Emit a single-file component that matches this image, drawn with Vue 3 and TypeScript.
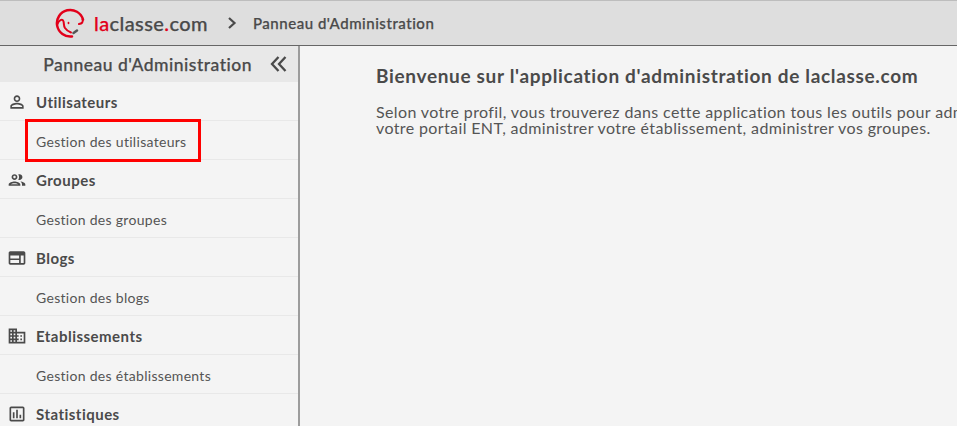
<script setup lang="ts">
const sections = [
  { title: 'Utilisateurs', link: 'Gestion des utilisateurs', icon: 'user', marked: true },
  { title: 'Groupes', link: 'Gestion des groupes', icon: 'group', marked: false },
  { title: 'Blogs', link: 'Gestion des blogs', icon: 'blog', marked: false },
  { title: 'Etablissements', link: 'Gestion des établissements', icon: 'domain', marked: false },
  { title: 'Statistiques', link: '', icon: 'stats', marked: false },
]
</script>

<template>
  <div class="page">
    <header class="topbar">
      <svg class="logo" viewBox="0 0 30 30" width="30" height="30" fill="none">
        <path d="M17 28.400A13.300 13.300 0 1 1 28 11.500" stroke="#e2001a" stroke-width="2.500" stroke-linecap="round" />
        <path d="M2.500 16c1-3.500 5-6 6-2.500.7 2.500 0 4 1.500 6.500 1 1.500 3 3.500 6 4.500" stroke="#e2001a" stroke-width="2" stroke-linecap="round" />
        <path d="M27.500 11.500c1 2.500-.5 4-3.500 4.500" stroke="#e2001a" stroke-width="2" stroke-linecap="round" />
        <ellipse cx="13.500" cy="15" rx=".9" ry="1.300" fill="#e2001a" />
        <path d="M18.500 25l3.500-2.500" stroke="#555" stroke-width="2.500" stroke-linecap="round" />
      </svg>
      <span class="brand"><span class="red">la</span>classe<span class="red">.</span>com</span>
      <svg class="crumb-sep" viewBox="0 0 10 14" width="10" height="14" fill="none">
        <path d="M2 2l5.500 5L2 12" stroke="#4a4a4a" stroke-width="2.200" />
      </svg>
      <span class="crumb">Panneau d'Administration</span>
    </header>
    <div class="body">
      <aside class="side">
        <div class="side-head">
          <span>Panneau d'Administration</span>
          <svg viewBox="0 0 18 18" width="18" height="18" fill="none" class="collapse">
            <path d="M8.500 2L2 9l6.500 7M15.500 2L9 9l6.500 7" stroke="#4a4a4a" stroke-width="2.300" />
          </svg>
        </div>
        <template v-for="s in sections" :key="s.title">
          <div class="row head">
            <svg class="ico" viewBox="0 0 24 24" width="20" height="20" fill="#4a4a4a">
              <path v-if="s.icon === 'user'" d="M12 5.900a2.100 2.100 0 1 1 0 4.200 2.100 2.100 0 0 1 0-4.200m0 9c2.970 0 6.100 1.460 6.100 2.100v1.100H5.900V17c0-.64 3.130-2.100 6.100-2.100M12 4C9.790 4 8 5.790 8 8s1.790 4 4 4 4-1.790 4-4-1.790-4-4-4zm0 9c-2.670 0-8 1.340-8 4v3h16v-3c0-2.660-5.330-4-8-4z" />
              <path v-else-if="s.icon === 'group'" d="M9 13.750c-2.340 0-7 1.170-7 3.500V19h14v-1.750c0-2.330-4.660-3.500-7-3.500zM4.340 17c.84-.58 2.870-1.250 4.660-1.250s3.820.67 4.660 1.250H4.340zM9 12c1.930 0 3.500-1.570 3.500-3.500S10.930 5 9 5 5.500 6.570 5.500 8.500 7.070 12 9 12zm0-5c.83 0 1.500.67 1.500 1.500S9.830 10 9 10s-1.500-.67-1.500-1.500S8.170 7 9 7zm7.040 6.810c1.160.84 1.960 1.960 1.960 3.440V19h4v-1.750c0-2.020-3.500-3.170-5.960-3.440zM15 12c1.930 0 3.500-1.570 3.500-3.500S16.930 5 15 5c-.54 0-1.040.13-1.500.35.630.89 1 1.980 1 3.150s-.37 2.260-1 3.150c.46.220.96.350 1.500.350z" />
              <path v-else-if="s.icon === 'blog'" d="M20 4H4c-1.100 0-2 .9-2 2v12c0 1.100.9 2 2 2h16c1.100 0 2-.9 2-2V6c0-1.100-.9-2-2-2zM4 9h10.500v3.500H4V9zm0 5.500h10.500V18H4v-3.500zM20 18h-3.500V9H20v9z" />
              <path v-else-if="s.icon === 'domain'" d="M12 7V3H2v18h20V7H12zM6 19H4v-2h2v2zm0-4H4v-2h2v2zm0-4H4V9h2v2zm0-4H4V5h2v2zm4 12H8v-2h2v2zm0-4H8v-2h2v2zm0-4H8V9h2v2zm0-4H8V5h2v2zm10 12h-8v-2h2v-2h-2v-2h2v-2h-2V9h8v10zm-2-8h-2v2h2v-2zm0 4h-2v2h2v-2z" />
              <path v-else d="M19 3H5c-1.100 0-2 .9-2 2v14c0 1.100.9 2 2 2h14c1.100 0 2-.9 2-2V5c0-1.100-.9-2-2-2zm0 16H5V5h14v14zM7 10h2v7H7zm4-3h2v10h-2zm4 6h2v4h-2z" />
            </svg>
            <span>{{ s.title }}</span>
          </div>
          <div v-if="s.link" class="row link">
            <span class="link-text" :class="{ marked: s.marked }">{{ s.link }}</span>
          </div>
        </template>
      </aside>
      <main class="main">
        <h1>Bienvenue sur l'application d'administration de laclasse.com</h1>
        <p>Selon votre profil, vous trouverez dans cette application tous les outils pour administrer<br />votre portail ENT, administrer votre établissement, administrer vos groupes.</p>
      </main>
    </div>
  </div>
</template>

<style>
html, body { margin: 0; overflow: hidden; }
</style>

<style scoped>
.page {
  width: 957px;
  height: 426px;
  overflow: hidden;
  display: flex;
  flex-direction: column;
  background: #f4f4f4;
  color: #4a4a4a;
  font-family: Lato, "Noto Sans", sans-serif;
}
.topbar {
  box-sizing: border-box;
  height: 46px;
  flex: none;
  display: flex;
  align-items: center;
  padding-left: 55px;
  background: #dedede;
  border-top: 1px solid #bdbdbd;
  border-bottom: 1px solid #666;
}
.logo { flex: none; }
.brand { margin-left: 9px; font-size: 20px; font-weight: 500; letter-spacing: .4px; -webkit-text-stroke: .25px #4a4a4a; }
.red { color: #e2001a; -webkit-text-stroke: .25px #e2001a; }
.crumb-sep { margin-left: 19px; }
.crumb { margin-left: 16px; font-size: 15px; font-weight: 500; letter-spacing: .53px; -webkit-text-stroke: .25px #4a4a4a; }
.body { flex: 1; display: flex; min-height: 0; }
.side {
  box-sizing: border-box;
  width: 300px;
  flex: none;
  border-right: 2px solid #9c9c9c;
}
.side-head {
  height: 36px;
  display: flex;
  align-items: center;
  justify-content: flex-end;
  gap: 18px;
  padding-right: 10px;
  background: #e8e8e8;
  font-size: 17.500px;
  font-weight: 500;
  letter-spacing: .5px;
  -webkit-text-stroke: .25px #4a4a4a;
}
.collapse { flex: none; }
.row {
  box-sizing: border-box;
  height: 39px;
  padding-top: 2px;
  display: flex;
  align-items: center;
  border-bottom: 1px solid #e8e8e8;
  white-space: nowrap;
}
.head { font-size: 15px; font-weight: 700; letter-spacing: .48px; padding-left: 7px; gap: 9px; }
.ico { flex: none; }
.link { font-size: 14px; padding-left: 36px; letter-spacing: .3px; color: #555; position: relative; }
.marked::after {
  content: "";
  position: absolute;
  left: 25px;
  top: -2px;
  width: 176px;
  height: 43px;
  box-sizing: border-box;
  border: 3px solid #f00;
}
.main { flex: 1; padding: 19px 0 0 76px; min-width: 0; white-space: nowrap; overflow: hidden; }
h1 { margin: 0; font-size: 19px; line-height: 22px; font-weight: 700; letter-spacing: .67px; }
p { margin: 17px 0 0; font-size: 16px; line-height: 16px; letter-spacing: .375px; color: #555; }
</style>
